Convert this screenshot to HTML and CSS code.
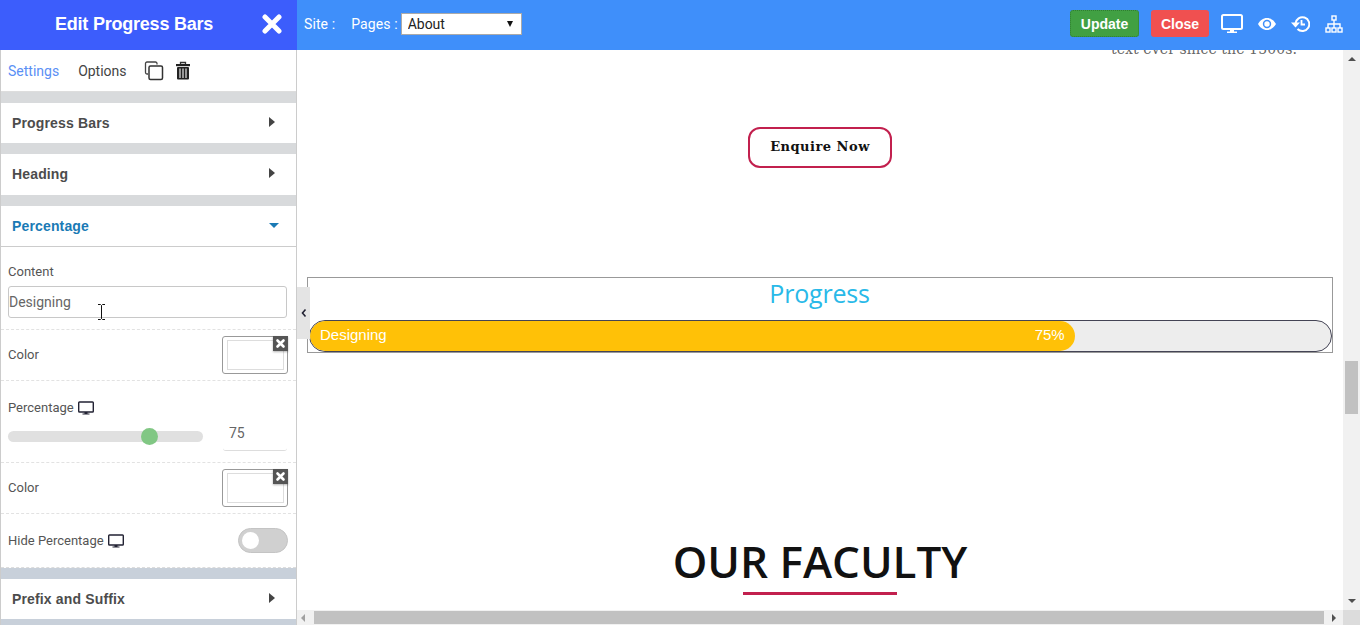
FILE: index.html
```html
<!DOCTYPE html>
<html>
<head>
    <meta charset="UTF-8">
    <title>Edit Progress Bars</title>
    <link rel="stylesheet" href="styles.css">
</head>
<body>
<div class="app">

    <aside class="sidebar">
        <div class="side-head">
            <span class="side-title">Edit Progress Bars</span>
            <svg class="side-close" width="20" height="20" viewBox="0 0 20 20"><path d="M3 3l14 14M17 3L3 17" stroke="#fff" stroke-width="5" stroke-linecap="round"/></svg>
        </div>
        <div class="side-body">
            <div class="tabs">
                <span class="tab active">Settings</span>
                <span class="tab">Options</span>
                <svg class="tab-icon copy" width="20" height="20" viewBox="0 0 20 20"><path d="M13 3.500V2.500A1.500 1.500 0 0 0 11.500 1H3A1.500 1.500 0 0 0 1.500 2.500v9A1.500 1.500 0 0 0 3 13h1" fill="none" stroke="#444" stroke-width="1.300"/><rect x="5" y="5" width="13.500" height="13.500" rx="1.500" fill="#fff" stroke="#333" stroke-width="1.500"/></svg>
                <svg class="tab-icon" width="16" height="20" viewBox="0 0 16 20"><path d="M5.500 3.500V1.500h5v2" fill="none" stroke="#333" stroke-width="1.300"/><rect x="1" y="3" width="14" height="2.200" fill="#222"/><rect x="2" y="6" width="12" height="12.500" rx="1" fill="#222"/><path d="M5 7.500v9.500M8 7.500v9.500M11 7.500v9.500" stroke="#c9c9c9" stroke-width="1.400"/></svg>
            </div>

            <div class="strip"></div>
            <div class="group"><span>Progress Bars</span><i class="caret-right"></i></div>
            <div class="strip"></div>
            <div class="group tall"><span>Heading</span><i class="caret-right"></i></div>
            <div class="strip"></div>
            <div class="group open"><span>Percentage</span><i class="caret-down"></i></div>

            <div class="field content-field">
                <label class="lbl">Content</label>
                <div class="text-input">Designing</div>
                <svg class="ibeam" width="9" height="16" viewBox="0 0 9 16"><path d="M1 .5h2.500L4.500 1.500 5.500.5H8M4.500 1.500v13M1 15.500h2.500l1-1 1 1H8" fill="none" stroke="#111" stroke-width="1"/></svg>
            </div>

            <div class="field row color-row">
                <label class="lbl">Color</label>
                <div class="swatch">
                    <div class="swatch-inner"></div>
                    <div class="swatch-x"><svg width="11" height="11" viewBox="0 0 11 11"><path d="M2.500 2.500l6 6M8.500 2.500l-6 6" stroke="#fff" stroke-width="2.600" stroke-linecap="round"/></svg></div>
                </div>
            </div>

            <div class="field percent-field">
                <label class="lbl">Percentage <svg class="mon" width="16" height="14" viewBox="0 0 16 14"><use href="#monitor"/></svg></label>
                <div class="slider-row">
                    <div class="slider"><div class="thumb"></div></div>
                    <div class="num">75</div>
                </div>
            </div>

            <div class="field row color-row">
                <label class="lbl">Color</label>
                <div class="swatch">
                    <div class="swatch-inner"></div>
                    <div class="swatch-x"><svg width="11" height="11" viewBox="0 0 11 11"><path d="M2.500 2.500l6 6M8.500 2.500l-6 6" stroke="#fff" stroke-width="2.600" stroke-linecap="round"/></svg></div>
                </div>
            </div>

            <div class="field row hide-row">
                <label class="lbl">Hide Percentage <svg class="mon" width="16" height="14" viewBox="0 0 16 14"><use href="#monitor"/></svg></label>
                <div class="toggle"><div class="knob"></div></div>
            </div>

            <div class="strip blue"></div>
            <div class="group"><span>Prefix and Suffix</span><i class="caret-right"></i></div>
            <div class="strip blue"></div>
        </div>
    </aside>

    <div class="right">
        <header class="topbar">
            <span class="top-lbl site">Site :</span>
            <span class="top-lbl">Pages :</span>
            <div class="select-wrap">
                <select class="page-select"><option>About</option></select>
            </div>
            <div class="top-actions">
                <button class="btn green">Update</button>
                <button class="btn red">Close</button>
                <svg class="ico-desktop" width="22" height="20" viewBox="0 0 22 20"><path d="M2.500 1h17A1.500 1.500 0 0 1 21 2.500v11a1.500 1.500 0 0 1-1.500 1.500h-17A1.500 1.500 0 0 1 1 13.500v-11A1.500 1.500 0 0 1 2.500 1z" fill="none" stroke="#fff" stroke-width="2"/><path d="M9 15h4v2.500H9zM6 17.500h10V19H6z" fill="#fff"/></svg>
                <svg class="ico-eye" width="18" height="12" viewBox="0 0 18 12"><path d="M9 0C5 0 2 2.500 0 6c2 3.500 5 6 9 6s7-2.500 9-6c-2-3.500-5-6-9-6zm0 10.200A4.200 4.200 0 1 1 9 1.800a4.200 4.200 0 0 1 0 8.400zM9 3.300a2.700 2.700 0 1 0 0 5.400 2.700 2.700 0 0 0 0-5.400z" fill="#fff" fill-rule="evenodd"/></svg>
                <svg class="ico-history" width="19" height="18" viewBox="0 0 19 18"><path d="M4.500 8.500A6.900 6.900 0 1 1 6.500 14" fill="none" stroke="#fff" stroke-width="2"/><path d="M0 7.500h9L4.500 12.500z" fill="#fff"/><path d="M10.500 5v4.500h3.500" fill="none" stroke="#fff" stroke-width="1.800"/></svg>
                <svg class="ico-map" width="18" height="18" viewBox="0 0 18 18"><g fill="none" stroke="#fff" stroke-width="1.400"><rect x="7" y="1" width="4" height="4"/><rect x="1" y="13" width="4" height="4"/><rect x="7" y="13" width="4" height="4"/><rect x="13" y="13" width="4" height="4"/><path d="M9 5v8M3 13V9h12v4"/></g></svg>
            </div>
        </header>

        <div class="work">
            <main class="canvas">
                <p class="old-text">text ever since the 1500s.</p>
                <div class="enquire-wrap"><a class="enquire">Enquire Now</a></div>

                <section class="progress-box">
                    <h3 class="progress-title">Progress</h3>
                    <div class="bar">
                        <div class="bar-fill" style="width: 74.9%">
                            <span>Designing</span><span>75%</span>
                        </div>
                    </div>
                </section>

                <h2 class="faculty">OUR FACULTY</h2>
                <div class="faculty-line"></div>
            </main>

            <div class="vscroll">
                <i class="arr-up"></i>
                <div class="vthumb"></div>
                <i class="arr-down"></i>
            </div>
            <div class="hscroll">
                <i class="arr-left"></i>
                <div class="hthumb"></div>
                <i class="arr-right"></i>
            </div>
            <div class="corner"></div>

            <div class="collapse-tab"><svg width="6" height="10" viewBox="0 0 6 10"><path d="M4.500 1.500L1.500 5l3 3.500" fill="none" stroke="#223" stroke-width="1.600"/></svg></div>
        </div>
    </div>
</div>

<svg width="0" height="0" class="defs">
    <symbol id="monitor" viewBox="0 0 16 14"><path d="M1.500 1h13a.8.8 0 0 1 .8.8v8.400a.8.8 0 0 1-.8.8h-13a.8.8 0 0 1-.8-.8V1.800a.8.8 0 0 1 .8-.8z" fill="none" stroke="#223" stroke-width="1.400"/><path d="M6.500 11h3v1.500h-3zM4.500 12.500h7v1h-7z" fill="#223"/></symbol>
</svg>
</body>
</html>
```

FILE: styles.css
```css
* {
    box-sizing: border-box;
}

html, body {
    margin: 0;
    height: 625px;
    overflow: hidden;
}

body {
    font-family: Roboto, "Liberation Sans", sans-serif;
    background: #fff;
}

.defs {
    display: none;
}

.app {
    display: flex;
    height: 625px;
}

/* left panel */
.sidebar {
    width: 297px;
    flex: none;
    display: flex;
    flex-direction: column;
}

.side-head {
    height: 50px;
    background: #3c5dfc;
    display: flex;
    align-items: center;
    padding-left: 55px;
    flex: none;
}

.side-title {
    color: #fff;
    font-family: "Liberation Sans", sans-serif;
    font-size: 18px;
    font-weight: 700;
    letter-spacing: -.22px;
    width: 207px;
    margin-bottom: 2px;
}

.side-close {
    margin-bottom: 3px;
}

.side-body {
    flex: 1;
    border-left: 1px solid #ccc;
    border-right: 1px solid #ccc;
    overflow: hidden;
}

.tabs {
    height: 42px;
    padding: 1px 0 0 7px;
    display: flex;
    align-items: center;
    border-bottom: 1px solid #ddd;
    font-size: 14px;
}

.tab {
    color: #444;
    margin-right: 17px;
}

.tab.active {
    color: #5a8ff5;
    margin-right: 19px;
}

.tab-icon.copy {
    margin-right: 11px;
}

.strip {
    height: 11px;
    background: #d8dadc;
}

.strip.blue {
    background: #c8d0da;
}

.group {
    height: 40px;
    padding: 0 21px 0 11px;
    display: flex;
    align-items: center;
    justify-content: space-between;
    font-family: "Liberation Sans", sans-serif;
    font-size: 14px;
    font-weight: 700;
    color: #4c4c4c;
    letter-spacing: .15px;
}

.group.tall {
    height: 41px;
    padding-bottom: 1px;
}

.group.open {
    height: 41px;
    color: #1a7ab5;
    border-bottom: 1px solid #ccc;
    padding-right: 17px;
}

.caret-right {
    width: 0;
    height: 0;
    margin-top: -2px;
    border-left: 6px solid #444;
    border-top: 5px solid transparent;
    border-bottom: 5px solid transparent;
}

.caret-down {
    width: 0;
    height: 0;
    margin-top: -1px;
    border-top: 5px solid #1a7ab5;
    border-left: 5.500px solid transparent;
    border-right: 5.500px solid transparent;
}

.field {
    padding: 0 8px 0 7px;
    border-bottom: 1px dashed #e2e2e2;
    font-size: 13px;
}

.lbl {
    color: #555;
    font-size: 13px;
    display: flex;
    align-items: center;
    gap: 4px;
}

.row {
    display: flex;
    align-items: center;
    justify-content: space-between;
}

.content-field {
    position: relative;
    height: 83px;
    padding-top: 17px;
}

.text-input {
    margin-top: 7px;
    height: 32px;
    width: 279px;
    border: 1px solid #c8c8c8;
    border-radius: 3px;
    font-size: 14px;
    line-height: 30px;
    color: #666;
}

.ibeam {
    position: absolute;
    left: 96px;
    top: 57px;
}

.color-row {
    height: 51px;
}

.color-row .lbl {
    margin-top: -2px;
}

.swatch {
    position: relative;
    width: 66px;
    height: 38px;
    border: 1px solid #999;
    border-radius: 3px;
    padding: 3px 3px 3px 4px;
}

.swatch-inner {
    height: 100%;
    border: 1px solid #ddd;
}

.swatch-x {
    position: absolute;
    top: -1px;
    right: -1px;
    width: 15px;
    height: 15px;
    background: #555;
    display: flex;
    align-items: center;
    justify-content: center;
    box-shadow: 0 1px 2px rgba(0, 0, 0, .3);
}

.percent-field {
    height: 82px;
    padding-top: 19px;
}

.slider-row {
    display: flex;
    margin-top: 6px;
}

.slider {
    position: relative;
    width: 195px;
    height: 11px;
    margin-top: 10px;
    border-radius: 6px;
    background: #e0e0e0;
}

.thumb {
    position: absolute;
    left: 133px;
    top: -3px;
    width: 17px;
    height: 17px;
    border-radius: 50%;
    background: #81c784;
}

.num {
    margin-left: 20px;
    width: 64px;
    height: 30px;
    padding-left: 6px;
    border-bottom: 1px solid #ddd;
    border-radius: 0 0 3px 3px;
    font-size: 14px;
    line-height: 24px;
    color: #666;
}

.hide-row {
    height: 54px;
    border-bottom: 1px dashed #ddd;
}

.toggle {
    width: 50px;
    height: 25px;
    border-radius: 13px;
    background: #d0d0d0;
    border: 1px solid #c4c4c4;
    padding: 3px;
}

.knob {
    width: 17px;
    height: 17px;
    border-radius: 50%;
    background: #fff;
}

/* top bar and page */
.right {
    flex: 1;
    min-width: 0;
    display: flex;
    flex-direction: column;
}

.topbar {
    height: 50px;
    flex: none;
    background: #3f8ffa;
    display: flex;
    align-items: center;
    padding: 0 17px 2px 7px;
    color: #fff;
    font-size: 14px;
    position: relative;
    z-index: 2;
}

.top-lbl {
    margin-right: 3px;
    letter-spacing: .1px;
}

.top-lbl.site {
    margin-right: 16px;
}

.select-wrap {
    position: relative;
    width: 121px;
    height: 22px;
}

/* solid arrow, the native one is a chevron here */
.select-wrap::after {
    content: "";
    position: absolute;
    right: 9px;
    top: 8px;
    border-top: 6px solid #111;
    border-left: 3.500px solid transparent;
    border-right: 3.500px solid transparent;
}

.page-select {
    width: 100%;
    height: 100%;
    appearance: none;
    border: 1px solid #aaa;
    background: #fff;
    color: #222;
    font-family: Roboto, sans-serif;
    font-size: 14px;
    padding: 0 0 0 6px;
    border-radius: 0;
}

.top-actions {
    margin-left: auto;
    display: flex;
    align-items: center;
}

.top-actions svg {
    margin-bottom: 1px;
}

.btn {
    height: 27px;
    border: 1px solid transparent;
    border-radius: 3px;
    color: #fff;
    font-family: "Liberation Sans", sans-serif;
    font-size: 14px;
    font-weight: 700;
    padding: 0;
    margin-bottom: 1px;
}

.btn.green {
    width: 69px;
    background: #41a043;
    border: 1px dotted #2f7d31;
    margin-right: 12px;
}

.btn.red {
    width: 58px;
    background: #f05050;
    margin-right: 12px;
}

.ico-desktop {
    margin-right: 15px;
}

.ico-eye {
    margin-right: 15px;
}

.ico-history {
    margin-right: 15px;
}

.work {
    position: relative;
    flex: 1;
    min-height: 0;
    display: grid;
    grid-template-columns: 1fr 17px;
    grid-template-rows: 1fr 15px;
}

.canvas {
    overflow: hidden;
    min-width: 0;
    background: #fff;
}

.old-text {
    margin: -13px 46px 0 0;
    text-align: right;
    font-family: "DejaVu Serif", serif;
    font-size: 14px;
    letter-spacing: .1px;
    line-height: 24px;
    color: #666;
}

.enquire-wrap {
    display: flex;
    justify-content: center;
    margin-top: 66px;
}

.enquire {
    width: 144px;
    height: 41px;
    border: 2px solid #c2204e;
    border-radius: 12px;
    font-family: "DejaVu Serif", serif;
    font-size: 13px;
    font-weight: 700;
    letter-spacing: .5px;
    line-height: 35px;
    text-align: center;
    color: #111;
}

.progress-box {
    margin: 109px 10px 0;
    height: 76px;
    border: 1px solid #999;
    padding: 0 0 0 1px;
}

.progress-title {
    margin: 0;
    height: 42px;
    padding-right: 2px;
    font-family: "Open Sans", sans-serif;
    font-size: 25px;
    font-weight: 400;
    letter-spacing: -.2px;
    line-height: 30px;
    text-align: center;
    color: #29b9e8;
}

.bar {
    height: 32px;
    border: 1px solid #445;
    border-radius: 16px;
    background: #ededed;
    overflow: hidden;
}

.bar-fill {
    height: 100%;
    background: #ffc107;
    border-radius: 15px;
    display: flex;
    justify-content: space-between;
    align-items: center;
    padding: 0 10px 3px;
    color: #fff;
    font-family: "Liberation Sans", sans-serif;
    font-size: 15px;
}

.faculty {
    margin: 179px 0 0;
    height: 60px;
    font-family: "Open Sans", sans-serif;
    font-size: 44px;
    font-weight: 600;
    line-height: 58px;
    text-align: center;
    color: #111;
}

.faculty-line {
    width: 154px;
    height: 3px;
    margin: 0 auto;
    background: #c2204e;
}

/* page scrollbars */
.vscroll {
    background: #f1f1f1;
    display: flex;
    flex-direction: column;
    align-items: center;
}

.vthumb {
    width: 13px;
    height: 53px;
    margin-top: 300px;
    background: #c1c1c1;
}

.arr-up {
    margin-top: 7px;
    border-bottom: 4px solid #505050;
    border-left: 4px solid transparent;
    border-right: 4px solid transparent;
}

.arr-down {
    margin-top: auto;
    margin-bottom: 7px;
    border-top: 4px solid #505050;
    border-left: 4px solid transparent;
    border-right: 4px solid transparent;
}

.hscroll {
    background: #f1f1f1;
    display: flex;
    align-items: center;
}

.hthumb {
    width: 1010px;
    height: 13px;
    margin-left: 9px;
    background: #c1c1c1;
}

.arr-left {
    margin-left: 4px;
    border-right: 4px solid #a0a0a0;
    border-top: 4px solid transparent;
    border-bottom: 4px solid transparent;
}

.arr-right {
    margin-left: 8px;
    border-left: 4px solid #505050;
    border-top: 4px solid transparent;
    border-bottom: 4px solid transparent;
}

.corner {
    background: #dcdcdc;
}

.collapse-tab {
    position: absolute;
    left: 0;
    top: 237px;
    width: 13px;
    height: 52px;
    background: #e4e4e4;
    display: flex;
    align-items: center;
    justify-content: center;
}
```
